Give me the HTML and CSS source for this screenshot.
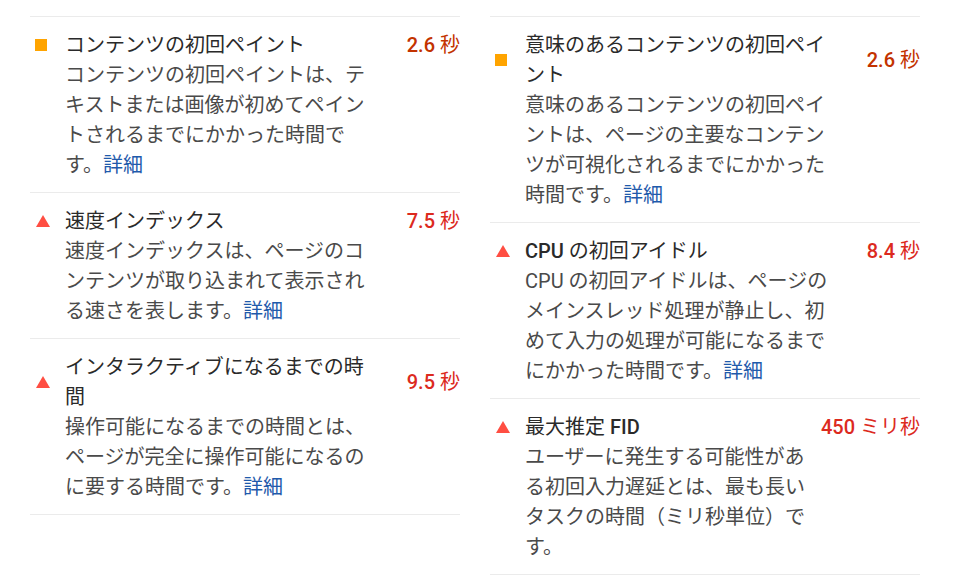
FILE: index.html
```html
<!DOCTYPE html>
<html lang="ja">
<head>
  <meta charset="UTF-8" />
  <meta name="viewport" content="width=device-width, initial-scale=1.0" />
  <title>指標</title>
  <link rel="stylesheet" href="styles.css">
</head>
<body>
  <div class="metrics">
    <div class="metric-col">
      <div class="metric average">
        <span class="icon"></span>
        <div class="title">コンテンツの初回ペイント</div>
        <div class="value"><span class="num">2.6</span> 秒</div>
        <div class="desc">コンテンツの初回ペイントは、テキストまたは画像が初めてペイントされるまでにかかった時間です。<a href="#">詳細</a></div>
      </div>
      <div class="metric fail">
        <span class="icon"></span>
        <div class="title">速度インデックス</div>
        <div class="value"><span class="num">7.5</span> 秒</div>
        <div class="desc">速度インデックスは、ページのコンテンツが取り込まれて表示される速さを表します。<a href="#">詳細</a></div>
      </div>
      <div class="metric fail">
        <span class="icon"></span>
        <div class="title">インタラクティブになるまでの時間</div>
        <div class="value"><span class="num">9.5</span> 秒</div>
        <div class="desc">操作可能になるまでの時間とは、ページが完全に操作可能になるのに要する時間です。<a href="#">詳細</a></div>
      </div>
    </div>
    <div class="metric-col">
      <div class="metric average">
        <span class="icon"></span>
        <div class="title">意味のあるコンテンツの初回ペイント</div>
        <div class="value"><span class="num">2.6</span> 秒</div>
        <div class="desc">意味のあるコンテンツの初回ペイントは、ページの主要なコンテンツが可視化されるまでにかかった時間です。<a href="#">詳細</a></div>
      </div>
      <div class="metric fail">
        <span class="icon"></span>
        <div class="title"><b>CPU</b> の初回アイドル</div>
        <div class="value"><span class="num">8.4</span> 秒</div>
        <div class="desc">CPU の初回アイドルは、ページのメインスレッド処理が静止し、初めて入力の処理が可能になるまでにかかった時間です。<a href="#">詳細</a></div>
      </div>
      <div class="metric fail">
        <span class="icon"></span>
        <div class="title">最大推定 <b>FID</b></div>
        <div class="value"><span class="num">450</span> ミリ秒</div>
        <div class="desc">ユーザーに発生する可能性がある初回入力遅延とは、最も長いタスクの時間（ミリ秒単位）です。</div>
      </div>
    </div>
  </div>
</body>
</html>
```

FILE: styles.css
```css
body {
  margin: 0;
  background: #fff;
  font-family: Roboto, "Noto Sans CJK JP", sans-serif;
  font-size: 20px;
  line-height: 30px;
  color: #2a2a2a;
}
.metrics {
  display: grid;
  grid-template-columns: 430px 430px;
  column-gap: 30px;
  align-items: start;
  padding: 16px 30px 0;
}
.metric {
  display: grid;
  grid-template-columns: 35px minmax(0, 310px) 1fr;
  padding: 13px 0 12px;
  border-top: 1px solid #ebebeb;
}
.metric:last-child {
  border-bottom: 1px solid #ebebeb;
}
.icon {
  grid-column: 1;
  grid-row: 1;
  align-self: center;
  margin-left: 5px;
}
.average .icon {
  width: 12px;
  height: 12px;
  background: #ffa400;
}
.fail .icon {
  width: 0;
  height: 0;
  margin-left: 6px;
  border-left: 7px solid transparent;
  border-right: 7px solid transparent;
  border-bottom: 12px solid #ff4e42;
}
.title {
  grid-column: 2;
  grid-row: 1;
}
.title b {
  font-weight: 500;
}
.value {
  grid-column: 3;
  grid-row: 1;
  align-self: center;
  justify-self: end;
  text-align: right;
  white-space: nowrap;
}
.value .num {
  font-weight: 500;
}
.average .value {
  color: #c33300;
}
.fail .value {
  color: #dc2a1e;
}
.desc {
  grid-column: 2;
  grid-row: 2;
  color: #4a4a4a;
}
.desc a {
  color: #1f5aab;
  text-decoration: none;
}
```
